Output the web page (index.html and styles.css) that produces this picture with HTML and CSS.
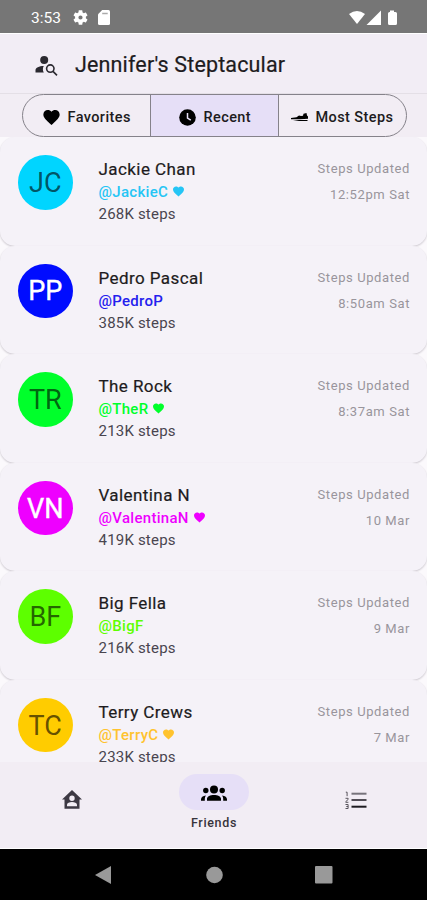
FILE: index.html
```
<!DOCTYPE html>
<html lang="en">
<head>
<meta charset="utf-8">
<title>Jennifer's Steptacular</title>
<link rel="stylesheet" href="styles.css">
</head>
<body>
<svg class="defs" width="0" height="0">
  <symbol id="heart" viewBox="2 3 20 18.4"><path d="M12 21.35l-1.45-1.32C5.4 15.36 2 12.28 2 8.5 2 5.42 4.42 3 7.5 3c1.74 0 3.41.81 4.5 2.09C13.09 3.81 14.76 3 16.5 3 19.58 3 22 5.42 22 8.5c0 3.78-3.4 6.86-8.55 11.54L12 21.35z"/></symbol>
</svg>
<div class="phone">
  <div class="status">
    <span class="clock">3:53</span>
    <svg class="gear" width="15" height="15" viewBox="2 2 20 20"><path d="M19.14 12.94c.04-.3.06-.61.06-.94 0-.32-.02-.64-.07-.94l2.03-1.58c.18-.14.23-.41.12-.61l-1.92-3.32c-.12-.22-.37-.29-.59-.22l-2.39.96c-.5-.38-1.03-.7-1.62-.94l-.36-2.54c-.04-.24-.24-.41-.48-.41h-3.84c-.24 0-.43.17-.47.41l-.36 2.54c-.59.24-1.13.57-1.62.94l-2.39-.96c-.22-.08-.47 0-.59.22L2.74 8.87c-.12.21-.08.47.12.61l2.03 1.58c-.05.3-.09.63-.09.94s.02.64.07.94l-2.03 1.58c-.18.14-.23.41-.12.61l1.92 3.32c.12.22.37.29.59.22l2.39-.96c.5.38 1.03.7 1.62.94l.36 2.54c.05.24.24.41.48.41h3.84c.24 0 .44-.17.47-.41l.36-2.54c.59-.24 1.13-.56 1.62-.94l2.39.96c.22.08.47 0 .59-.22l1.92-3.32c.12-.22.07-.47-.12-.61l-2.01-1.58zM12 14.8a2.8 2.8 0 1 1 0-5.6 2.8 2.8 0 0 1 0 5.6z"/></svg>
    <svg class="sd" width="12" height="15" viewBox="0 0 12 15"><path d="M4.200 0H10.500Q12 0 12 1.500V13.500Q12 15 10.500 15H1.500Q0 15 0 13.500V4.200z"/><path class="slots" d="M4.200 3.500h5.500"/></svg>
    <svg class="signal" width="49" height="16" viewBox="0 0 49 16"><path d="M0 4Q8 -2 16 4L8 14z"/><path d="M32 .5V15H17.500z"/><path d="M41 .5h4v1.500h1.500q1.500 0 1.500 1.500v10q0 1.500-1.500 1.500h-6q-1.500 0-1.500-1.500V3.500q0-1.500 1.500-1.500h.5z"/></svg>
  </div>
  <header class="appbar">
    <svg width="23" height="22" viewBox="0 0 23 22"><circle cx="9.200" cy="5" r="4"/><path d="M.5 17.500v-2.300c0-2.600 3.500-4.300 8.300-4.300-1.200 2-1.200 4.600 0 6.600z"/><circle class="lens" cx="15.300" cy="13.600" r="3.700"/><path class="lens" d="M18 16.400l4 4"/></svg>
    <h1>Jennifer's Steptacular</h1>
  </header>
  <div class="filters">
    <div class="segmented">
      <div class="segment"><svg width="17" height="15"><use href="#heart"/></svg><span>Favorites</span></div>
      <div class="segment selected"><svg width="17" height="17" viewBox="0 0 17 17"><circle cx="8.500" cy="8.500" r="8.300"/><path class="hands" d="M8.500 4v5l3.300 2.200"/></svg><span>Recent</span></div>
      <div class="segment last"><svg width="17" height="9" viewBox="0 0 17 9"><path d="M0 5L5.500 4.300 8 2.500 10 3 12 2.800 12.500.8 15.500 0 16 2.500 17 3.500V5.800L9 6.300 0 6.300z"/><path d="M2 7h14.500v1H8z"/></svg><span>Most Steps</span></div>
    </div>
  </div>
  <main class="list">
    <article class="card cyan"><div class="avatar">JC</div><div class="who"><h2>Jackie Chan</h2><p class="handle">@JackieC<svg width="11" height="11"><use href="#heart"/></svg></p><p class="steps">268K steps</p></div><div class="when"><p>Steps Updated</p><p>12:52pm Sat</p></div></article>
    <article class="card blue"><div class="avatar light">PP</div><div class="who"><h2>Pedro Pascal</h2><p class="handle">@PedroP</p><p class="steps">385K steps</p></div><div class="when"><p>Steps Updated</p><p>8:50am Sat</p></div></article>
    <article class="card green"><div class="avatar">TR</div><div class="who"><h2>The Rock</h2><p class="handle">@TheR<svg width="11" height="11"><use href="#heart"/></svg></p><p class="steps">213K steps</p></div><div class="when"><p>Steps Updated</p><p>8:37am Sat</p></div></article>
    <article class="card magenta"><div class="avatar light">VN</div><div class="who"><h2>Valentina N</h2><p class="handle">@ValentinaN<svg width="11" height="11"><use href="#heart"/></svg></p><p class="steps">419K steps</p></div><div class="when"><p>Steps Updated</p><p>10 Mar</p></div></article>
    <article class="card lime"><div class="avatar">BF</div><div class="who"><h2>Big Fella</h2><p class="handle">@BigF</p><p class="steps">216K steps</p></div><div class="when"><p>Steps Updated</p><p>9 Mar</p></div></article>
    <article class="card amber"><div class="avatar">TC</div><div class="who"><h2>Terry Crews</h2><p class="handle">@TerryC<svg width="11" height="11"><use href="#heart"/></svg></p><p class="steps">233K steps</p></div><div class="when"><p>Steps Updated</p><p>7 Mar</p></div></article>
  </main>
  <nav class="tabs">
    <div class="tab"><svg class="home" width="20" height="19" viewBox="0 0 20 19"><path fill-rule="evenodd" d="M10 0L20 9.500H17.500V18.800H2.500V9.500H0zM10 5.500a2.700 2.700 0 1 0 0 5.400 2.700 2.700 0 0 0 0-5.400zM5 16.300h10v-1.500c0-1.800-2.500-2.800-5-2.800s-5 1-5 2.800z"/></svg></div>
    <div class="tab active"><div class="pill"><svg width="28" height="17" viewBox="0 0 28 17"><circle cx="14" cy="4.500" r="4"/><circle cx="5.800" cy="5.500" r="2.700"/><circle cx="22.200" cy="5.500" r="2.700"/><path d="M7 15.700v-1.900c0-2.500 3.300-3.800 7-3.800s7 1.300 7 3.800v1.900zM1 15.700v-1.300c0-2 1.800-3.700 5-4-.8 1-1.200 2.200-1.200 3.400v1.900zM27 15.700v-1.300c0-2-1.800-3.700-5-4 .8 1 1.200 2.200 1.200 3.400v1.900z"/></svg></div><span>Friends</span></div>
    <div class="tab"><svg class="ranks" width="22" height="19" viewBox="0 0 22 19"><path class="rule soft" d="M6.500 2.700h15"/><path class="rule mid" d="M6.500 9h15"/><path class="rule" d="M6.500 15.700h15"/><path class="digit" d="M.8 1.200h1.300v4M.5 7.300h2.600v1.200L.8 10.600v.7h2.600M.5 13.500h2.600v4H.5M1.300 15.500h1.800"/></svg></div>
  </nav>
  <div class="system">
    <svg width="16" height="20" viewBox="0 0 16 20"><path d="M16 1v18L0 10z"/></svg>
    <svg width="17" height="20" viewBox="0 0 17 20"><circle cx="8.500" cy="10" r="8.300"/></svg>
    <svg width="18" height="20" viewBox="0 0 18 20"><rect y="1" width="17.500" height="17.500" rx="1"/></svg>
  </div>
</div>
</body>
</html>
```

FILE: styles.css
```
* { box-sizing: border-box; }
body, h1, h2, p { margin: 0; }
body { font-family: Roboto, sans-serif; color: #1d1b20; background: #f2edf4; overflow: hidden; }
svg { display: block; flex: none; }
.defs { position: absolute; }
.phone { width: 427px; height: 900px; display: flex; flex-direction: column; }

.status { height: 33px; flex: none; background: #767676; color: #fff; fill: #fff; display: flex; align-items: center; padding: 2px 29px 0 31px; }
.clock { font-size: 15.500px; width: 42px; }
.sd { margin-left: 10px; }
.slots { stroke: #aaa; stroke-width: 1.500; }
.signal { margin-left: auto; }

.appbar { height: 61px; flex: none; display: flex; align-items: center; padding: 2px 0 0 35px; border-top: 1px solid #fff; border-bottom: 1px solid #e4dfe6; background: #f2edf5; }
.appbar svg { fill: #2b2930; margin-top: 2px; }
.appbar h1 { margin-left: 17px; font-size: 21.500px; font-weight: 400; line-height: 28px; letter-spacing: .15px; -webkit-text-stroke: .2px; }
.appbar .lens { fill: none; stroke: #2b2930; stroke-width: 1.600; }

.filters { height: 43px; flex: none; padding: 0 20px 0 22px; background: #f2edf4; }
.segmented { height: 43px; display: grid; grid-template-columns: 127px 128px 1fr; border: 1px solid #85828a; border-radius: 22px; overflow: hidden; }
.segment { display: flex; align-items: center; padding: 3px 0 0 20px; gap: 7.500px; font-size: 14.500px; font-weight: 500; letter-spacing: .4px; white-space: nowrap; }
.segment + .segment { border-left: 1px solid #85828a; }
.selected { background: #e6dff7; padding-left: 28px; }
.last { padding-left: 12px; }
.hands { fill: none; stroke: #e6dff7; stroke-width: 1.500; }

.list { height: 625px; flex: none; overflow: hidden; background: #fbf9fc; }
.card { height: 108.600px; display: flex; align-items: flex-start; padding: 18px 17px 0 18px; border-radius: 15px; background: #f5f2f8; box-shadow: 0 1px 2px #cbc7ce; color: #1d1b20; }
.avatar { width: 54.500px; height: 54.500px; flex: none; border-radius: 50%; display: flex; align-items: center; justify-content: center; font-size: 27px; background: var(--tone); color: rgba(0, 0, 0, .62); padding-top: 1px; }
.avatar.light { color: #fff; -webkit-text-stroke: .4px; }
.who { margin-left: 26px; padding-top: 3px; }
.who h2 { font-size: 17px; font-weight: 400; line-height: 23px; letter-spacing: .42px; -webkit-text-stroke: .2px; }
.handle { display: flex; align-items: center; gap: 5px; color: var(--tone); fill: var(--tone); font-size: 15px; font-weight: 500; line-height: 23px; letter-spacing: .3px; }
.handle svg { margin-top: -2px; }
.steps { font-size: 15px; line-height: 21px; letter-spacing: .2px; color: #49454f; }
.when { margin-left: auto; padding-top: 1px; text-align: right; font-size: 13px; line-height: 26px; letter-spacing: .6px; color: #99959c; }
.cyan { --tone: #00d5ff; }
.cyan .handle { --tone: #25c5f5; }
.blue { --tone: #000cff; }
.blue .handle { --tone: #2420ee; }
.green { --tone: #00ff2b; }
.magenta { --tone: #ee00ff; }
.lime { --tone: #5dff00; }
.amber { --tone: #ffcc00; }
.amber .handle { --tone: #ffc32e; }

.tabs { height: 87px; flex: none; display: grid; grid-template-columns: 143px 142px 1fr; background: #f2edf4; border-bottom: 1px solid #fff; }
.tab { display: flex; flex-direction: column; align-items: center; padding-top: 12px; }
.home { margin-top: 16px; fill: #3d3943; }
.pill { width: 70px; height: 36px; border-radius: 18px; background: #e6dff7; display: flex; align-items: center; justify-content: center; padding-top: 2px; }
.tab span { margin-top: 4px; font-size: 12.500px; line-height: 17px; font-weight: 500; letter-spacing: .65px; color: #37343b; }
.ranks { margin-top: 17px; fill: none; }
.rule { stroke: #1d1b20; stroke-width: 2; }
.mid { stroke: #514d55; }
.soft { stroke: #77737b; }
.digit { stroke: #59555d; stroke-width: 1; }

.system { height: 51px; flex: none; display: flex; align-items: center; padding-left: 95px; background: #000; fill: #999; }
.system svg + svg { margin-left: 94.500px; }
.system svg:last-child { margin-left: 92.500px; }
```
